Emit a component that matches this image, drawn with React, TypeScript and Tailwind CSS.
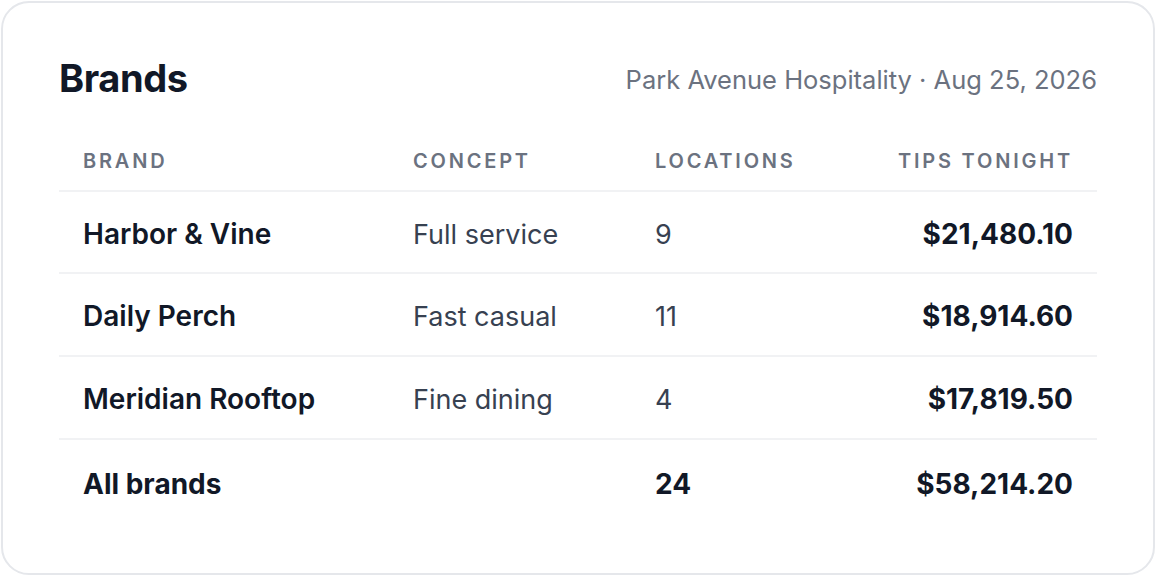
import React from "react";

const rows = [
  { name: "Harbor & Vine", concept: "Full service", loc: "9", tips: "$21,480.10", h: "h-[82px]" },
  { name: "Daily Perch", concept: "Fast casual", loc: "11", tips: "$18,914.60", h: "h-[83px]" },
  { name: "Meridian Rooftop", concept: "Fine dining", loc: "4", tips: "$17,819.50", h: "h-[83px]" },
];

const cols = "grid grid-cols-[330px_242px_200px_1fr] content-center items-baseline";

export default function App() {
  return (
    <div className="w-[1156px] h-[576px] bg-white p-px" style={{ fontFamily: "Inter, 'Noto Sans', sans-serif" }}>
      <div className="h-[574px] rounded-[28px] border-2 border-[#e5e7eb] bg-white px-[56px] pt-[52px]">
        <div className="flex items-center justify-between h-[46px]">
          <h1 className="text-[38px] leading-[46px] font-bold text-[#111827] tracking-[-0.01em]">Brands</h1>
          <div className="text-[25.5px] leading-[32px] text-[#6b7280] pt-[3px]">Park Avenue Hospitality · Aug 25, 2026</div>
        </div>
        <div className="mt-[31px]">
          <div className={`${cols} h-[60px] border-b-2 border-[#f1f2f4] text-[20px] leading-[28px] font-semibold uppercase tracking-[0.14em] text-[#6b7280]`}>
            <div className="px-6">Brand</div>
            <div className="px-6">Concept</div>
            <div className="px-6">Locations</div>
            <div className="px-6 text-right">Tips tonight</div>
          </div>
          {rows.map((r) => (
            <div key={r.name} className={`${cols} ${r.h} pt-[4px] border-b-2 border-[#f1f2f4] text-[27px] leading-[36px]`}>
              <div className="px-6 text-[28px] font-semibold text-[#111827]">{r.name}</div>
              <div className="px-6 text-[#374151]">{r.concept}</div>
              <div className="px-6 text-[#374151]">{r.loc}</div>
              <div className="px-6 text-right text-[28px] font-bold text-[#111827]">{r.tips}</div>
            </div>
          ))}
          <div className={`${cols} h-[83px] pt-[4px] text-[28px] leading-[36px] font-bold text-[#111827]`}>
            <div className="px-6">All brands</div>
            <div className="px-6"></div>
            <div className="px-6">24</div>
            <div className="px-6 text-right">$58,214.20</div>
          </div>
        </div>
      </div>
    </div>
  );
}
